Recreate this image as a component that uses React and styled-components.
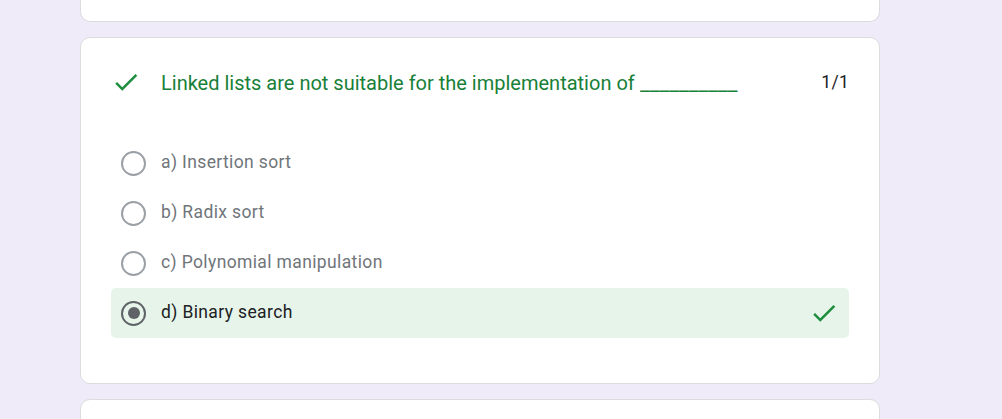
import styled, { createGlobalStyle } from "styled-components"

const GlobalStyle = createGlobalStyle`
  html, body {
    margin: 0;
    padding: 0;
    background: #f0ebf8;
    font-family: Roboto, "Noto Sans", Arial, sans-serif;
  }
`

const options = [
  { label: "a) Insertion sort" },
  { label: "b) Radix sort" },
  { label: "c) Polynomial manipulation" },
  { label: "d) Binary search", selected: true, correct: true },
]

const CheckIcon = ({ size = 30 }) => (
  <svg width={size} height={size} viewBox="0 0 24 24" fill="#1e8e3e">
    <path d="M9 16.17L4.83 12l-1.42 1.41L9 19 21 7l-1.41-1.41z" />
  </svg>
)

const App = () => {
  return (
    <>
      <GlobalStyle />
      <Page>
        <PrevCard />
        <Card>
          <Header>
            <IconBox>
              <CheckIcon />
            </IconBox>
            <Title>
              Linked lists are not suitable for the implementation of <Blank>__________</Blank>
            </Title>
            <Score>1/1</Score>
          </Header>
          <Options>
            {options.map((o) => (
              <Option key={o.label} selected={o.selected}>
                <Radio checked={o.selected} />
                <OptionLabel selected={o.selected}>{o.label}</OptionLabel>
                {o.correct && (
                  <RightIcon>
                    <CheckIcon size={30} />
                  </RightIcon>
                )}
              </Option>
            ))}
          </Options>
        </Card>
        <NextCard />
      </Page>
    </>
  )
}

const Page = styled.div`
  width: 800px;
  margin-left: 80px;
  display: flex;
  flex-direction: column;
  gap: 15px;
  height: 419px;
  overflow: hidden;
`

const PrevCard = styled.div`
  flex: none;
  height: 21px;
  background: #fff;
  border: 1px solid #dadce0;
  border-top: none;
  border-radius: 0 0 10px 10px;
`

const Card = styled.div`
  flex: none;
  background: #fff;
  border: 1px solid #dadce0;
  border-radius: 10px;
  padding: 29px 30px 45px;
`

const NextCard = styled.div`
  flex: none;
  height: 100px;
  background: #fff;
  border: 1px solid #dadce0;
  border-radius: 10px;
`

const Header = styled.div`
  display: flex;
  align-items: center;
  height: 30px;
  margin-bottom: 41px;
`

const IconBox = styled.div`
  width: 30px;
  height: 30px;
  display: flex;
  margin-right: 20px;
`

const Title = styled.div`
  flex: 1;
  color: #188038;
  font-size: 20px;
  line-height: 30px;
  padding-top: 1px;
`

const Blank = styled.span`
  display: inline-block;
  transform: scaleX(1.08);
  transform-origin: left center;
`

const Score = styled.div`
  color: #202124;
  font-size: 17.5px;
  letter-spacing: 0.25px;
`

const Options = styled.div`
  display: flex;
  flex-direction: column;
`

const Option = styled.div`
  display: flex;
  align-items: center;
  height: 50px;
  padding: 0 10px 0 10px;
  border-radius: 5px;
  background: ${(p) => (p.selected ? "#e6f4ea" : "transparent")};
`

const Radio = styled.div`
  box-sizing: border-box;
  width: 25px;
  height: 25px;
  border-radius: 50%;
  border: 2.5px solid ${(p) => (p.checked ? "#5f6368" : "#9aa0a6")};
  display: flex;
  align-items: center;
  justify-content: center;
  margin-right: 15px;
  &::after {
    content: "";
    display: ${(p) => (p.checked ? "block" : "none")};
    width: 12px;
    height: 12px;
    border-radius: 50%;
    background: #5f6368;
  }
`

const OptionLabel = styled.div`
  flex: 1;
  font-size: 17.5px;
  letter-spacing: 0.37px;
  line-height: 24px;
  margin-bottom: 2px;
  color: ${(p) => (p.selected ? "#202124" : "#70757a")};
`

const RightIcon = styled.div`
  width: 30px;
  height: 30px;
  display: flex;
`

export default App
